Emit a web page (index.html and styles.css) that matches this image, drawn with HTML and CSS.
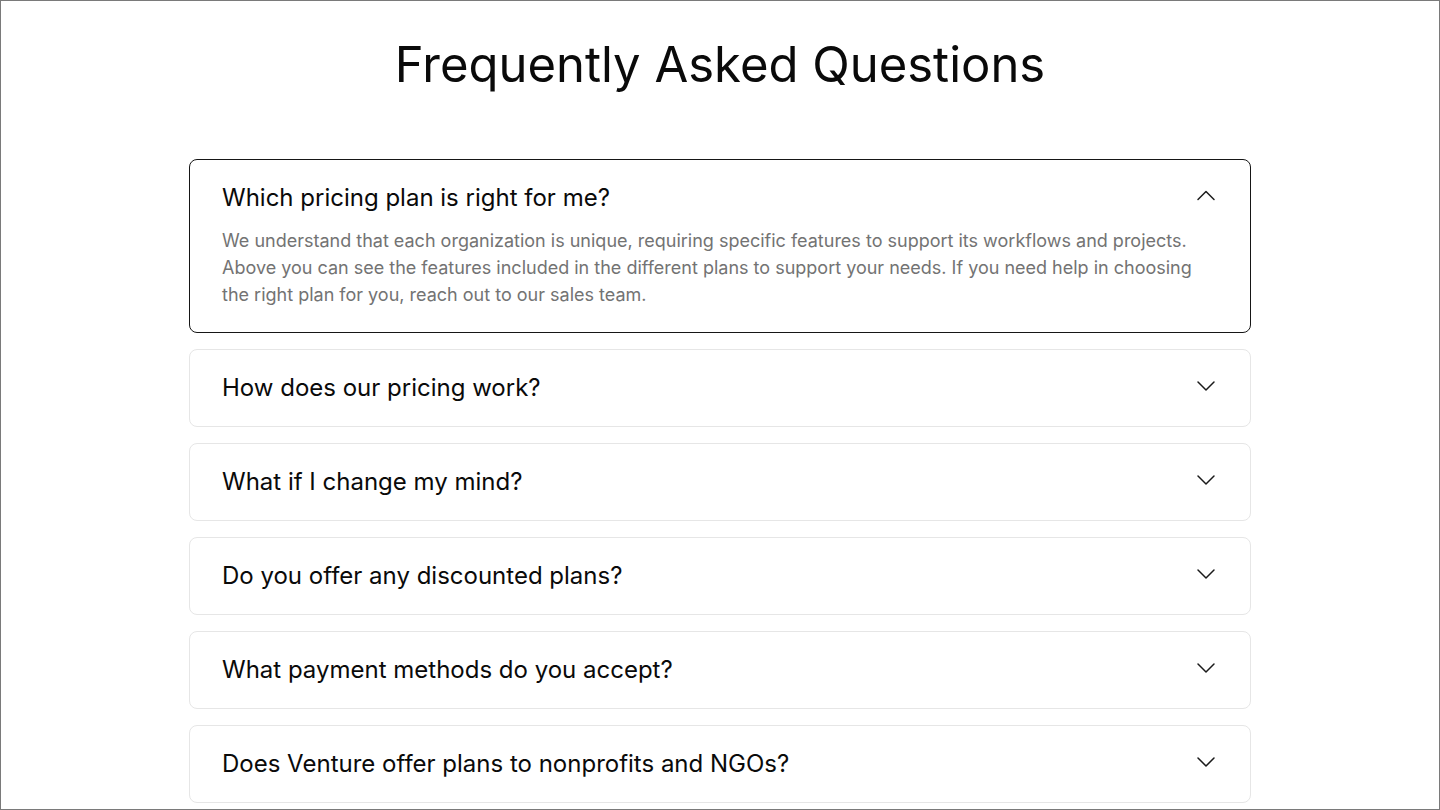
FILE: index.html
```html
<!DOCTYPE html>
<html lang="en">
<head>
<meta charset="utf-8">
<title>FAQ</title>
<link rel="stylesheet" href="styles.css">
</head>
<body>
<div class="page">
  <h1 class="title">Frequently Asked Questions</h1>
  <div class="faq-list">
    <div class="faq-item open">
      <div class="faq-head">
        <span class="faq-q">Which pricing plan is right for me?</span>
        <svg class="chev" viewBox="0 0 24 24" width="24" height="24"><path d="M4 15.5 L12 7.5 L20 15.5" /></svg>
      </div>
      <p class="faq-a">We understand that each organization is unique, requiring specific features to support its workflows and projects. Above you can see the features included in the different plans to support your needs. If you need help in choosing the right plan for you, reach out to our sales team.</p>
    </div>
    <div class="faq-item">
      <div class="faq-head">
        <span class="faq-q">How does our pricing work?</span>
        <svg class="chev" viewBox="0 0 24 24" width="24" height="24"><path d="M4 8 L12 16 L20 8" /></svg>
      </div>
    </div>
    <div class="faq-item">
      <div class="faq-head">
        <span class="faq-q">What if I change my mind?</span>
        <svg class="chev" viewBox="0 0 24 24" width="24" height="24"><path d="M4 8 L12 16 L20 8" /></svg>
      </div>
    </div>
    <div class="faq-item">
      <div class="faq-head">
        <span class="faq-q">Do you offer any discounted plans?</span>
        <svg class="chev" viewBox="0 0 24 24" width="24" height="24"><path d="M4 8 L12 16 L20 8" /></svg>
      </div>
    </div>
    <div class="faq-item">
      <div class="faq-head">
        <span class="faq-q">What payment methods do you accept?</span>
        <svg class="chev" viewBox="0 0 24 24" width="24" height="24"><path d="M4 8 L12 16 L20 8" /></svg>
      </div>
    </div>
    <div class="faq-item">
      <div class="faq-head">
        <span class="faq-q">Does Venture offer plans to nonprofits and NGOs?</span>
        <svg class="chev" viewBox="0 0 24 24" width="24" height="24"><path d="M4 8 L12 16 L20 8" /></svg>
      </div>
    </div>
  </div>
</div>
</body>
</html>
```

FILE: styles.css
```css
* { box-sizing: border-box; }

html, body {
  margin: 0;
  padding: 0;
  background: #ffffff;
}

body {
  font-family: Inter, "Noto Sans", "Liberation Sans", sans-serif;
  color: #111111;
}

.page {
  height: 810px;
  overflow: hidden;
  border: 1px solid #7a7a7a;
  padding-top: 35px;
}

.title {
  margin: 0 0 65px;
  font-size: 49px;
  font-weight: 400;
  line-height: 58px;
  text-align: center;
  color: #0a0a0a;
}

.faq-list {
  width: 1062px;
  margin: 0 auto;
  display: flex;
  flex-direction: column;
  gap: 16px;
}

.faq-item {
  border: 1px solid #e6e6e6;
  border-radius: 8px;
  padding: 24px 32px;
  background: #ffffff;
}

.faq-item.open {
  border-color: #161616;
}

.faq-head {
  display: flex;
  justify-content: space-between;
  align-items: flex-start;
  gap: 24px;
}

.faq-q {
  font-size: 24px;
  line-height: 28px;
  font-weight: 400;
  color: #0a0a0a;
}

.chev {
  flex: none;
  fill: none;
  stroke: #1a1a1a;
  stroke-width: 1.5;
  stroke-linecap: round;
  stroke-linejoin: round;
}

.faq-a {
  margin: 15px 0 0;
  font-size: 18px;
  line-height: 27px;
  color: #737373;
  max-width: 980px;
}
```
